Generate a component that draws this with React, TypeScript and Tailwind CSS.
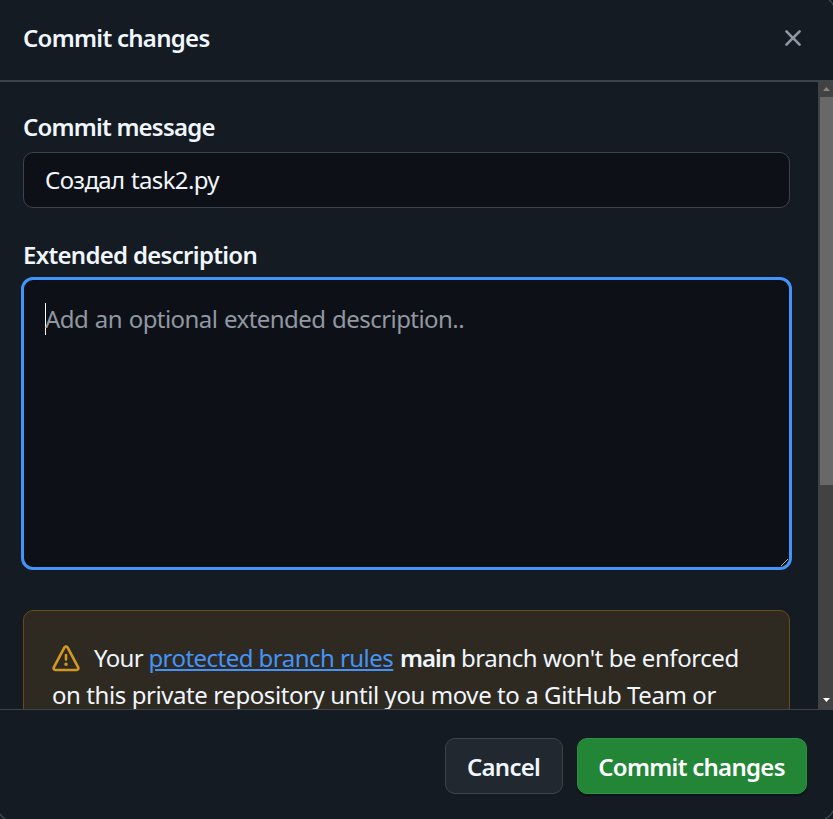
import React from 'react';

function CloseIcon() {
  return (
    <svg viewBox="0 0 16 16" className="h-7 w-7 fill-[#9198a1]">
      <path d="M3.72 3.72a.75.75 0 0 1 1.06 0L8 6.94l3.22-3.22a.749.749 0 0 1 1.275.326.749.749 0 0 1-.215.734L9.06 8l3.22 3.22a.749.749 0 0 1-.326 1.275.749.749 0 0 1-.734-.215L8 9.06l-3.22 3.22a.751.751 0 0 1-1.042-.018.751.751 0 0 1-.018-1.042L6.94 8 3.72 4.78a.75.75 0 0 1 0-1.06Z" />
    </svg>
  );
}

function AlertIcon() {
  return (
    <svg viewBox="0 0 16 16" className="mr-[14px] mt-[2px] h-7 w-7 shrink-0 fill-[#d29922]">
      <path d="M6.457 1.047c.659-1.234 2.427-1.234 3.086 0l6.082 11.378A1.75 1.75 0 0 1 14.082 15H1.918a1.75 1.75 0 0 1-1.543-2.575Zm1.763.707a.25.25 0 0 0-.44 0L1.698 13.132a.25.25 0 0 0 .22.368h12.164a.25.25 0 0 0 .22-.368Zm.53 3.996v2.5a.75.75 0 0 1-1.5 0v-2.5a.75.75 0 0 1 1.5 0ZM9 11a1 1 0 1 1-2 0 1 1 0 0 1 2 0Z" />
    </svg>
  );
}

function Scrollbar() {
  return (
    <div className="flex w-[15px] shrink-0 flex-col items-end bg-[#424242]">
      <svg viewBox="0 0 15 15" className="h-[15px] w-[15px] shrink-0 fill-[#868686]">
        <path d="M5 9h7L8.5 5Z" />
      </svg>
      <div className="h-[388px] w-[13px] bg-[#686868]" />
      <div className="grow" />
      <svg viewBox="0 0 15 17" className="h-[17px] w-[15px] shrink-0 fill-white">
        <path d="M5 6h7L8.5 10Z" />
      </svg>
    </div>
  );
}

export default function App() {
  return (
    <div className="relative flex h-[819px] w-[833px] flex-col overflow-hidden bg-[#151b23] font-['Noto_Sans','Open_Sans',sans-serif] text-[24px] leading-[37px] text-[#f0f6fc]">
      <header className="flex h-[82px] shrink-0 items-center justify-between border-b-2 border-[#3d444d] pb-[4px] pl-[23px] pr-[26px]">
        <h1 className="pb-[2px] font-semibold tracking-[-0.72px]">Commit changes</h1>
        <button aria-label="Close"><CloseIcon /></button>
      </header>

      <div className="flex h-[627px] shrink-0 overflow-hidden">
        <main className="flex grow flex-col pl-[23px] pr-[28px] pt-[26px]">
          <label className="h-[44px] shrink-0 font-semibold tracking-[-0.8px]">Commit message</label>
          <div className="flex h-14 shrink-0 items-center rounded-[10px] border border-[#3d444d] bg-[#0d1117] px-[21px] pb-[2px]">
            <span className="tracking-[-0.65px] [word-spacing:1px]">Создал task2.py</span>
          </div>
          <label className="mt-[28px] h-[41px] shrink-0 font-semibold tracking-[-0.7px]">Extended description</label>
          <div className="relative -mx-[2px] flex h-[293px] shrink-0 items-start rounded-[12px] border-[3px] border-[#4493f8] bg-[#0d1117] pl-[21px] pt-[20px]">
            <i className="-mr-px mt-[3px] h-8 w-px bg-white" />
            <span className="tracking-[-0.56px] text-[#9198a1] [word-spacing:1px]">Add an optional extended description..</span>
            <svg viewBox="0 0 9 9" className="absolute bottom-0 right-0 h-[9px] w-[9px]" stroke="#b5b8bc" strokeWidth="1">
              <path d="M1 8 8 1" />
            </svg>
          </div>
          <section className="mt-10 h-[150px] shrink-0 rounded-[10px] border border-[#674a15] bg-[#2e2a21] px-7 pt-[28px]">
            <div className="flex h-[37px] items-center whitespace-nowrap">
              <AlertIcon />
              <p className="whitespace-nowrap tracking-[-0.44px]">
                <span className="tracking-[-0.7px]">Your </span><a className="tracking-[-0.54px] text-[#4493f8] underline decoration-2 underline-offset-[2px]">protected branch rules</a> <b className="ml-[1px] font-semibold tracking-[-1px]">main</b> branch won't be enforced
              </p>
            </div>
            <p className="whitespace-nowrap tracking-[-0.42px]">on this private repository until you move to a GitHub Team or</p>
          </section>
        </main>
        <Scrollbar />
      </div>

      <footer className="flex h-[110px] shrink-0 items-start justify-end gap-[14px] border-t border-[#3d444d] pr-[26px] pt-7">
        <button className="h-14 w-[118px] rounded-[10px] border border-[#3d444d] bg-[#212830] pr-[1px] font-semibold tracking-[-0.75px]">Cancel</button>
        <button className="h-14 w-[230px] rounded-[10px] border border-[#2f9241] bg-[#238636] pr-[1px] font-semibold tracking-[-0.72px] text-white shadow-[0_2px_1px_rgba(1,4,9,0.4)]">Commit changes</button>
      </footer>

      <svg viewBox="0 0 833 819" className="pointer-events-none absolute inset-0 h-full w-full" fill="none" stroke="#3d444d" strokeWidth="1.5">
        <path d="M829 0Q832 2 833 5M825 819Q831 816 833 811M0 814Q2 817 5 819" />
      </svg>
    </div>
  );
}
